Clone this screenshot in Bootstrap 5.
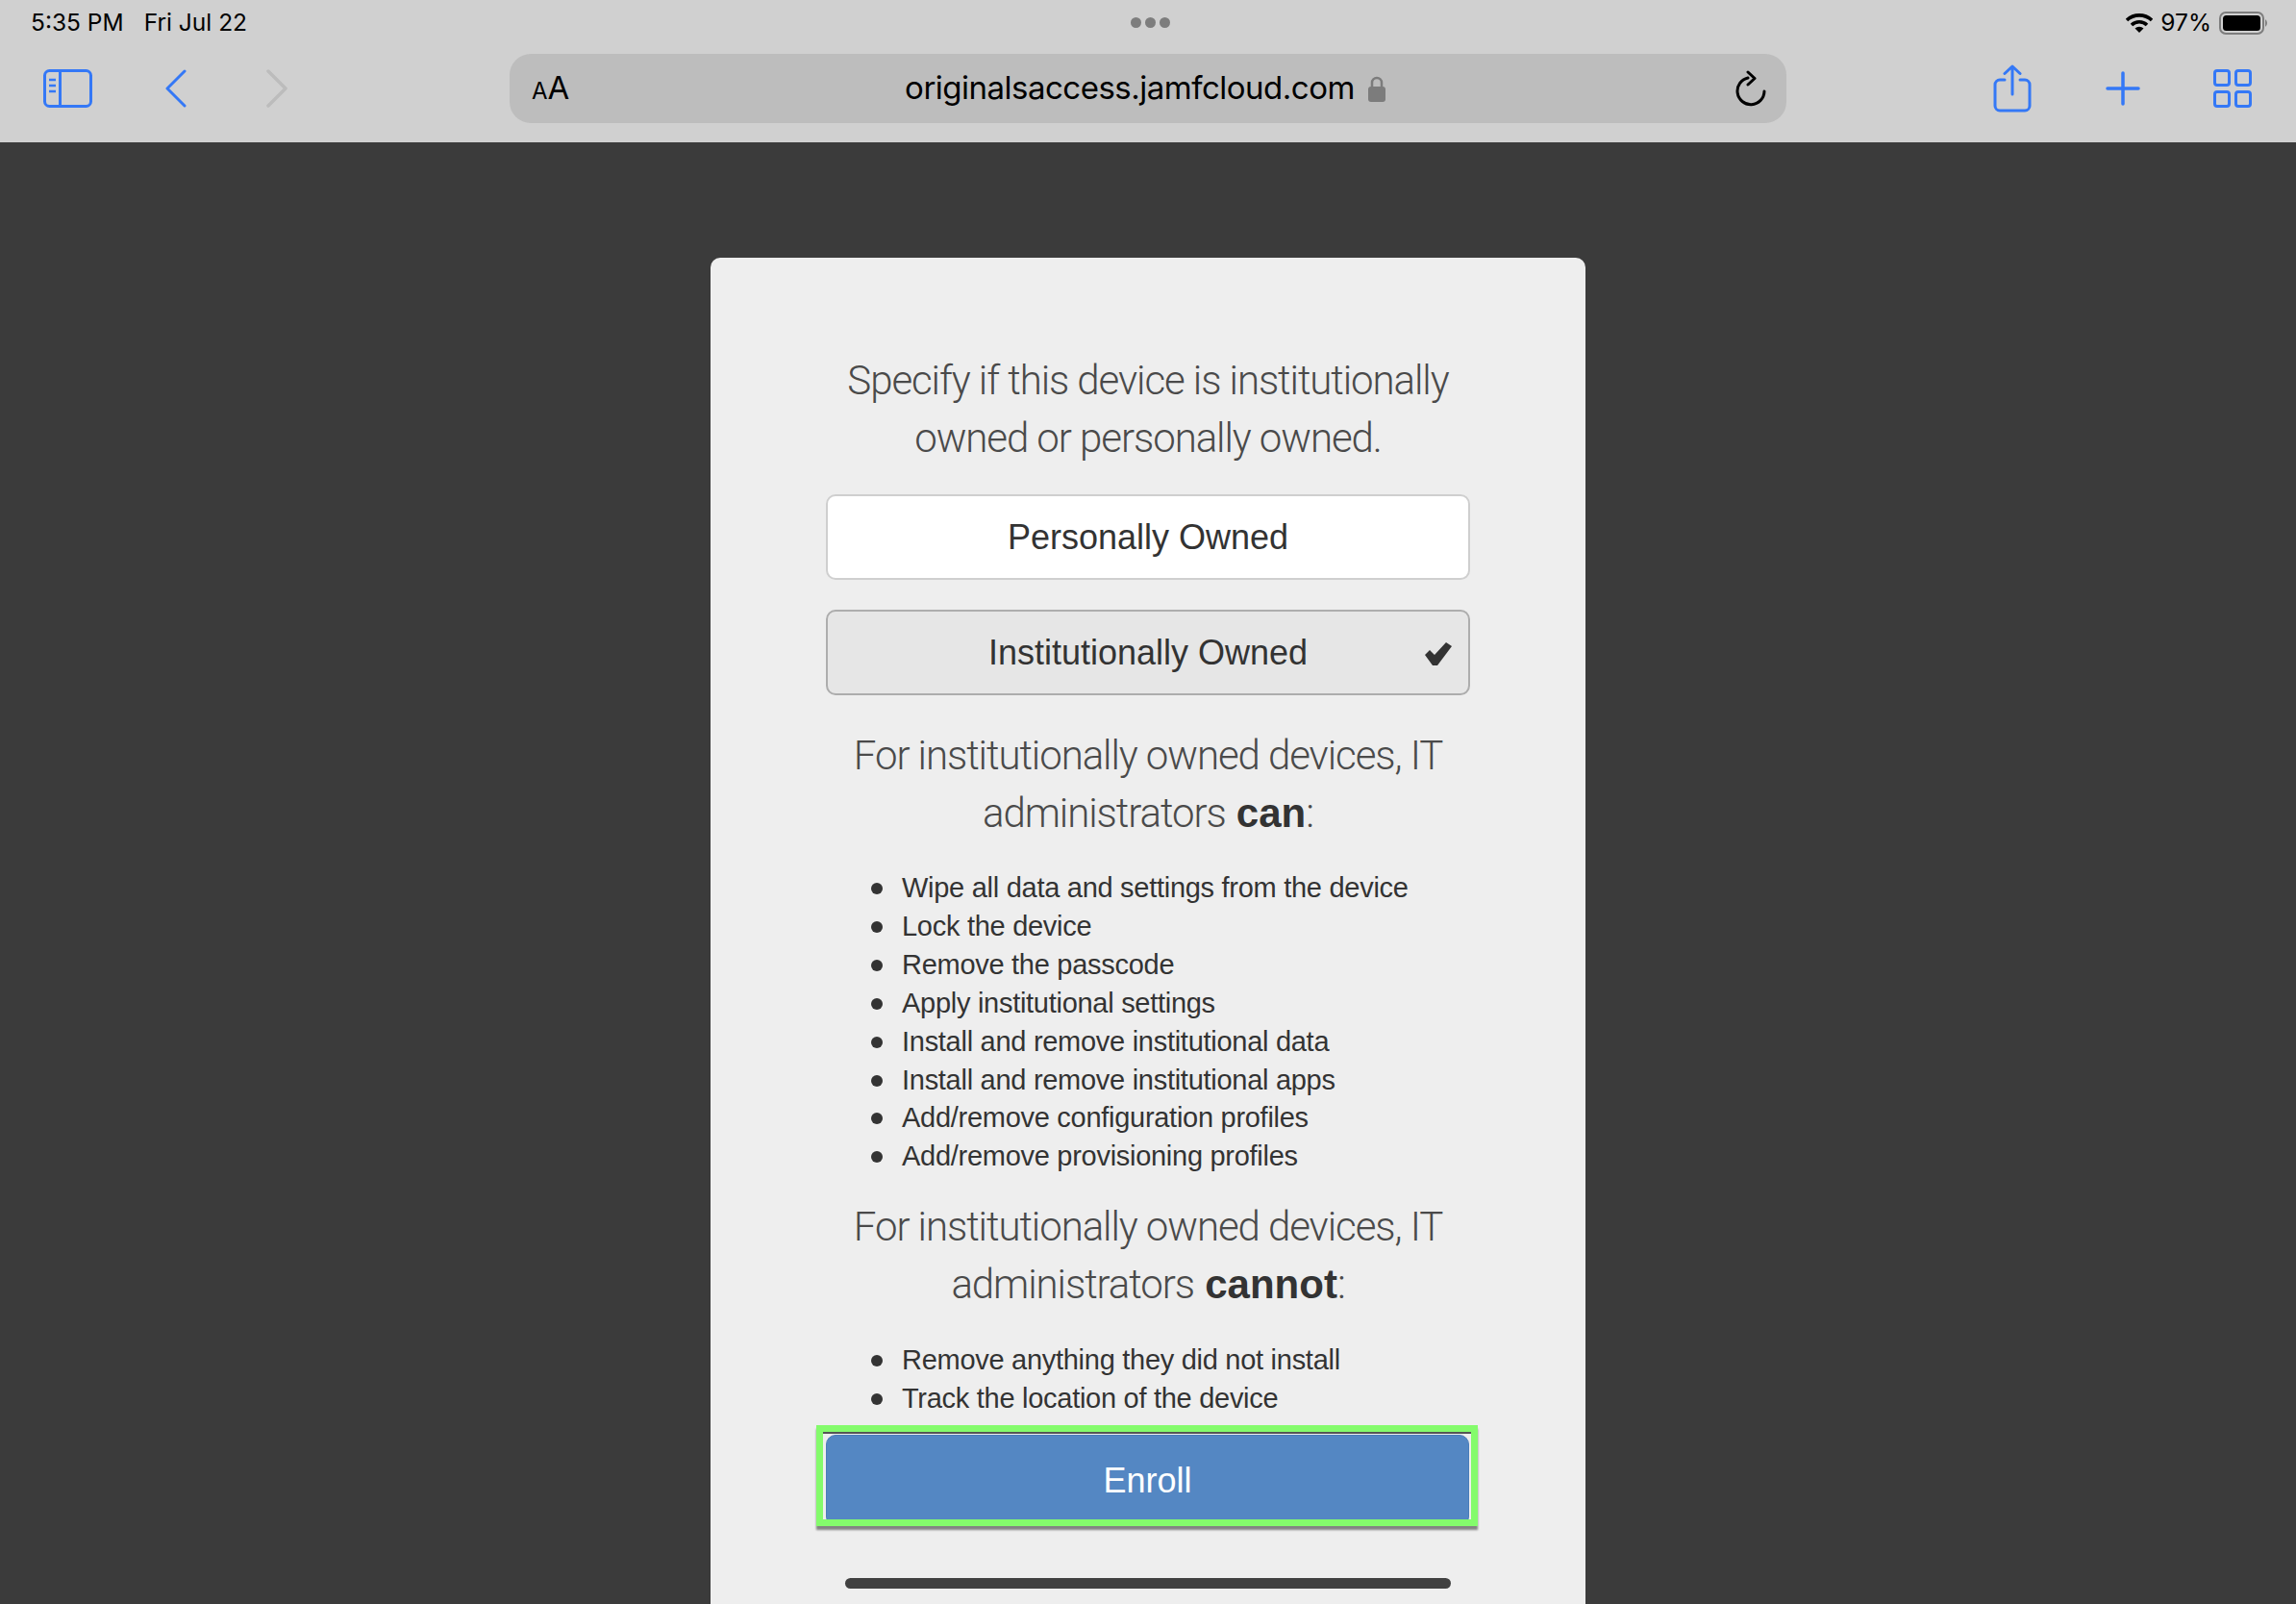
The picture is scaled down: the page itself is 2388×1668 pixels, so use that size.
<!DOCTYPE html>
<html lang="en">

<head>
  <meta charset="UTF-8" />
  <meta name="viewport" content="width=device-width, initial-scale=1.0" />
  <title>Enrollment</title>
  <link href="https://cdn.jsdelivr.net/npm/bootstrap@5.3.0/dist/css/bootstrap.min.css" rel="stylesheet" />
  <style>
    html, body {
      height: 100%;
    }

    body {
      background: #3b3b3b;
      overflow: hidden;
      font-family: "Liberation Sans", Arial, sans-serif;
      color: #333;
    }

    #top-bar {
      height: 148px;
      background: #d0d0d0;
      font-family: Inter, "Liberation Sans", sans-serif;
      color: #000;
    }

    #status-row {
      height: 56px;
      display: grid;
      grid-template-columns: 1fr auto 1fr;
      padding: 0 28px 9px 32px;
      font-size: 24.5px;
    }

    .status-left {
      gap: 21px;
    }

    .status-dots span {
      width: 11px;
      height: 11px;
      background: #7d7d7d;
      border-radius: 50%;
    }

    #tool-row {
      display: grid;
      grid-template-columns: 530px 1328px 1fr;
      height: 72px;
    }

    .tool-left {
      padding-left: 45px;
    }

    .tool-right {
      padding-right: 46px;
    }

    .back-icon {
      margin-left: 76px;
    }

    .forward-icon {
      margin-left: 83px;
    }

    .plus-icon {
      margin-left: 77px;
    }

    .tabs-icon {
      margin-left: 76px;
    }

    #address-bar {
      background: #bdbdbd;
      border-radius: 22px;
      padding: 0 21px 0 23px;
      display: grid;
      grid-template-columns: 1fr auto 1fr;
      align-items: center;
    }

    .aa-small {
      font-size: 24px;
    }

    .aa-big {
      font-size: 33px;
    }

    .url-group {
      gap: 14px;
      margin-right: 8px;
    }

    .url-text {
      font-size: 33px;
      letter-spacing: -0.5px;
    }

    #enroll-panel {
      width: 910px;
      height: 1400px;
      margin: 120px auto 0;
      background: #eee;
      border-radius: 10px 10px 0 0;
      padding: 98px 120px 0;
    }

    .panel-heading {
      font-family: Roboto, "Liberation Sans", sans-serif;
      font-weight: 300;
      font-size: 42px;
      line-height: 60px;
      text-align: center;
      letter-spacing: -1.08px;
      color: #4a4a4a;
      margin: 0;
    }

    .panel-heading b {
      font-family: "Liberation Sans", Arial, sans-serif;
      font-weight: 700;
      color: #333;
      letter-spacing: 0;
      margin-left: 2px;
    }

    .owner-btn {
      display: block;
      position: relative;
      width: 100%;
      height: 89px;
      margin-top: 28px;
      border-radius: 10px;
      font-size: 36px;
      color: #333;
      background: #fff;
      border: 2px solid #cfcfcf;
      padding: 0;
    }

    .owner-btn.is-picked {
      margin-top: 31px;
      margin-bottom: 33px;
      background: #e6e6e6;
      border-color: #adadad;
    }

    .owner-check {
      position: absolute;
      right: 17px;
      top: 32px;
    }

    .perm-list {
      font-size: 29px;
      letter-spacing: -0.28px;
      line-height: 39.9px;
      list-style: none;
      padding-left: 79px;
      margin: 28px 0 23px;
      color: #333;
    }

    .perm-list li::before {
      content: "";
      display: inline-block;
      width: 12px;
      height: 12px;
      margin-left: -32px;
      margin-right: 20px;
      border-radius: 50%;
      background: #333;
      vertical-align: 3px;
    }

    .perm-list.last-list {
      margin: 29px 0 7px;
    }

    #enroll-frame {
      margin: 0 -8px 0 -10px;
      height: 105px;
      border: 7px solid #84fb6c;
      box-shadow: 0 4px 2px rgba(0, 0, 0, .45);
      padding: 3px 2px 0 3px;
      background: #eee;
      position: relative;
      overflow: hidden;
    }

    #enroll-frame::before {
      content: "";
      position: absolute;
      left: 0;
      right: 0;
      top: 0;
      height: 2px;
      background: #555;
    }

    #enroll-btn {
      display: block;
      width: 100%;
      height: 95px;
      background: #5487c3;
      border: 1px solid #4a7db9;
      border-radius: 10px;
      color: #fff;
      font-size: 36px;
      padding: 0;
    }

    #home-bar {
      width: 630px;
      height: 11px;
      margin: 54px auto 0;
      background: #404040;
      border-radius: 6px;
    }
  </style>
</head>

<body>
  <div id="top-bar">
    <div id="status-row" class="align-items-center">
      <div class="status-left d-flex"><span>5:35 PM</span><span>Fri Jul 22</span></div>
      <div class="status-dots d-flex gap-1">
        <span></span><span></span><span></span>
      </div>
      <div class="d-flex justify-content-end align-items-center gap-2">
        <svg width="28" height="20" viewBox="0 0 28 20">
          <path d="M1 7 A19 19 0 0 1 27 7" fill="none" stroke="#000" stroke-width="3.6" />
          <path d="M6 12 A11.500 11.500 0 0 1 22 12" fill="none" stroke="#000" stroke-width="3.6" />
          <path d="M9.500 15.500 A6.500 6.500 0 0 1 18.500 15.500 L14 20 Z" fill="#000" />
        </svg>
        <span>97%</span>
        <svg width="52" height="24" viewBox="0 0 52 24">
          <rect x="1" y="1" width="45" height="22" rx="6" fill="none" stroke="#7d7d7d" stroke-width="2" />
          <rect x="4" y="4" width="39" height="16" rx="3.500" fill="#000" />
          <path d="M48 8 A5 5 0 0 1 48 16 Z" fill="#7d7d7d" />
        </svg>
      </div>
    </div>
    <div id="tool-row">
      <div class="tool-left d-flex align-items-center">
        <svg width="51" height="40" viewBox="0 0 51 40" fill="none" stroke="#3478f6" stroke-width="3">
          <rect x="1.500" y="1.500" width="48" height="37" rx="5" />
          <path d="M17.500 1.500 V38.500" />
          <path d="M6 11 H13 M6 17 H13 M6 23 H13" stroke-width="2.500" />
        </svg>
        <svg class="back-icon" width="22" height="40" viewBox="0 0 22 40" fill="none" stroke="#3478f6" stroke-width="3" stroke-linecap="round" stroke-linejoin="round">
          <path d="M20 2 L2 20 L20 38" />
        </svg>
        <svg class="forward-icon" width="22" height="40" viewBox="0 0 22 40" fill="none" stroke="#bcbcbc" stroke-width="3.500" stroke-linecap="round" stroke-linejoin="round">
          <path d="M2 2 L20 20 L2 38" />
        </svg>
      </div>
      <div id="address-bar">
        <div class="d-flex align-items-baseline"><span class="aa-small">A</span><span class="aa-big">A</span></div>
        <div class="url-group d-flex align-items-center">
          <span class="url-text">originalsaccess.jamfcloud.com</span>
          <svg width="18" height="27" viewBox="0 0 18 27">
            <path d="M4 12 V7 A5 5 0 0 1 14 7 V12" fill="none" stroke="#7c7c7c" stroke-width="2.500" />
            <rect y="11" width="18" height="16" rx="3" fill="#7c7c7c" />
          </svg>
        </div>
        <div class="d-flex justify-content-end">
          <svg width="32" height="38" viewBox="0 0 32 38" fill="none" stroke="#000" stroke-width="3" stroke-linecap="round" stroke-linejoin="round">
            <path d="M13 8 A14 14 0 1 0 30 22" />
            <path d="M13 2 L20 8.500 L13 15" />
          </svg>
        </div>
      </div>
      <div class="tool-right d-flex align-items-center justify-content-end">
        <svg width="40" height="50" viewBox="0 0 40 50" fill="none" stroke="#3478f6" stroke-width="3" stroke-linecap="round" stroke-linejoin="round">
          <path d="M12 16 H7 A5 5 0 0 0 2 21 V43 A5 5 0 0 0 7 48 H33 A5 5 0 0 0 38 43 V21 A5 5 0 0 0 33 16 H28" />
          <path d="M20 31 V2 M12 9.500 L20 2 L28 9.500" />
        </svg>
        <svg class="plus-icon" width="36" height="36" viewBox="0 0 36 36" fill="none" stroke="#3478f6" stroke-width="3.500" stroke-linecap="round">
          <path d="M18 2 V34 M2 18 H34" />
        </svg>
        <svg class="tabs-icon" width="40" height="40" viewBox="0 0 40 40" fill="none" stroke="#3478f6" stroke-width="3">
          <rect x="1.500" y="1.500" width="15" height="15" rx="2.500" />
          <rect x="23.500" y="1.500" width="15" height="15" rx="2.500" />
          <rect x="1.500" y="23.500" width="15" height="15" rx="2.500" />
          <rect x="23.500" y="23.500" width="15" height="15" rx="2.500" />
        </svg>
      </div>
    </div>
  </div>

  <div id="enroll-panel">
    <p class="panel-heading">Specify if this device is institutionally owned or personally owned.</p>
    <button type="button" class="btn owner-btn">Personally Owned</button>
    <button type="button" class="btn owner-btn is-picked">
      Institutionally Owned
      <svg class="owner-check" width="28" height="24" viewBox="0 0 28 24">
        <path d="M0 13 L5 8 L10 13 L22 0 L28 4 L13 24 L8 24 Z" fill="#333" />
      </svg>
    </button>
    <p class="panel-heading">For institutionally owned devices, IT administrators <b>can</b>:</p>
    <ul class="perm-list">
      <li>Wipe all data and settings from the device</li>
      <li>Lock the device</li>
      <li>Remove the passcode</li>
      <li>Apply institutional settings</li>
      <li>Install and remove institutional data</li>
      <li>Install and remove institutional apps</li>
      <li>Add/remove configuration profiles</li>
      <li>Add/remove provisioning profiles</li>
    </ul>
    <p class="panel-heading">For institutionally owned devices, IT administrators <b>cannot</b>:</p>
    <ul class="perm-list last-list">
      <li>Remove anything they did not install</li>
      <li>Track the location of the device</li>
    </ul>
    <div id="enroll-frame">
      <button type="button" class="btn" id="enroll-btn">Enroll</button>
    </div>
    <div id="home-bar"></div>
  </div>
  <script src="https://cdn.jsdelivr.net/npm/bootstrap@5.3.0/dist/js/bootstrap.bundle.min.js"></script>
</body>

</html>
